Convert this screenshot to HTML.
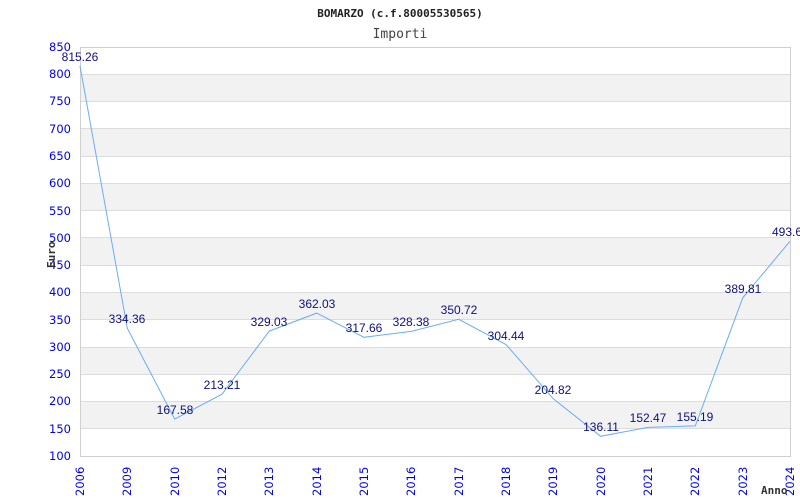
<!DOCTYPE html><html><head><meta charset="utf-8"><style>body{margin:0;background:#fff}svg{display:block}</style></head><body>
<svg width="800" height="500" xmlns="http://www.w3.org/2000/svg">
<rect width="800" height="500" fill="#fff"/>
<g fill="#f2f2f2">
<rect x="80" y="74.3" width="710" height="27.3"/>
<rect x="80" y="128.8" width="710" height="27.3"/>
<rect x="80" y="183.3" width="710" height="27.3"/>
<rect x="80" y="237.9" width="710" height="27.3"/>
<rect x="80" y="292.4" width="710" height="27.3"/>
<rect x="80" y="346.9" width="710" height="27.3"/>
<rect x="80" y="401.5" width="710" height="27.3"/>
</g>
<g stroke="#dcdcdc" stroke-width="1">
<line x1="80" y1="74.5" x2="790" y2="74.5"/><line x1="80" y1="101.5" x2="790" y2="101.5"/><line x1="80" y1="128.5" x2="790" y2="128.5"/><line x1="80" y1="156.5" x2="790" y2="156.5"/><line x1="80" y1="183.5" x2="790" y2="183.5"/><line x1="80" y1="210.5" x2="790" y2="210.5"/><line x1="80" y1="237.5" x2="790" y2="237.5"/><line x1="80" y1="265.5" x2="790" y2="265.5"/><line x1="80" y1="292.5" x2="790" y2="292.5"/><line x1="80" y1="319.5" x2="790" y2="319.5"/><line x1="80" y1="347.5" x2="790" y2="347.5"/><line x1="80" y1="374.5" x2="790" y2="374.5"/><line x1="80" y1="401.5" x2="790" y2="401.5"/><line x1="80" y1="428.5" x2="790" y2="428.5"/>
</g>
<rect x="80.5" y="47.5" width="710" height="409" fill="none" stroke="#d0d0d0"/>
<polyline fill="none" stroke="#6aaef0" stroke-width="1" points="80,65.9 127.3,328.2 174.7,419.1 222,394.2 269.3,331.1 316.7,313.1 364,337.3 411.3,331.4 458.7,319.3 506,344.5 553.3,398.8 600.7,436.3 648,427.4 695.3,425.9 742.7,297.9 790,241.3"/>
<g font-family="Liberation Sans,sans-serif" font-size="12" fill="#10107a" text-anchor="middle">
<text x="80" y="61">815.26</text><text x="127" y="323">334.36</text><text x="175" y="414">167.58</text><text x="222" y="389">213.21</text><text x="269" y="326">329.03</text><text x="317" y="308">362.03</text><text x="364" y="332">317.66</text><text x="411" y="326">328.38</text><text x="459" y="314">350.72</text><text x="506" y="340">304.44</text><text x="553" y="394">204.82</text><text x="601" y="431">136.11</text><text x="648" y="422">152.47</text><text x="695" y="421">155.19</text><text x="743" y="293">389.81</text><text x="787" y="236">493.6</text>
</g>
<g font-family="DejaVu Sans,sans-serif" font-size="11.5" fill="#0000ee" text-anchor="end">
<text x="71" y="51">850</text><text x="71" y="78">800</text><text x="71" y="105">750</text><text x="71" y="133">700</text><text x="71" y="160">650</text><text x="71" y="187">600</text><text x="71" y="215">550</text><text x="71" y="242">500</text><text x="71" y="269">450</text><text x="71" y="296">400</text><text x="71" y="324">350</text><text x="71" y="351">300</text><text x="71" y="378">250</text><text x="71" y="405">200</text><text x="71" y="433">150</text><text x="71" y="460">100</text>
</g>
<g font-family="DejaVu Sans,sans-serif" font-size="11.5" fill="#0000ee">
<text transform="translate(84,496) rotate(-90)">2006</text>
<text transform="translate(131,496) rotate(-90)">2009</text>
<text transform="translate(179,496) rotate(-90)">2010</text>
<text transform="translate(226,496) rotate(-90)">2012</text>
<text transform="translate(273,496) rotate(-90)">2013</text>
<text transform="translate(321,496) rotate(-90)">2014</text>
<text transform="translate(368,496) rotate(-90)">2015</text>
<text transform="translate(415,496) rotate(-90)">2016</text>
<text transform="translate(463,496) rotate(-90)">2017</text>
<text transform="translate(510,496) rotate(-90)">2018</text>
<text transform="translate(557,496) rotate(-90)">2019</text>
<text transform="translate(605,496) rotate(-90)">2020</text>
<text transform="translate(652,496) rotate(-90)">2021</text>
<text transform="translate(699,496) rotate(-90)">2022</text>
<text transform="translate(747,496) rotate(-90)">2023</text>
<text transform="translate(794,496) rotate(-90)">2024</text>
</g>
<text x="400" y="17" font-family="DejaVu Sans Mono,monospace" font-size="11" font-weight="bold" fill="#222" text-anchor="middle">BOMARZO (c.f.80005530565)</text>
<text x="400" y="38" font-family="DejaVu Sans Mono,monospace" font-size="13" fill="#444" text-anchor="middle">Importi</text>
<text transform="translate(55,268) rotate(-90)" font-family="DejaVu Sans Mono,monospace" font-size="11" font-weight="bold" fill="#333">Euro</text>
<text x="761" y="494" font-family="DejaVu Sans Mono,monospace" font-size="11" font-weight="bold" fill="#333">Anno</text>
</svg>
</body></html>
